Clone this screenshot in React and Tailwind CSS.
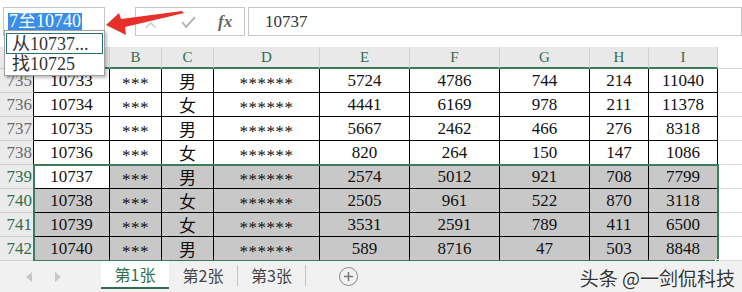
import React from "react";

const cols = [
  { key: "A", w: "w-[76px]" },
  { key: "B", w: "w-[52px]" },
  { key: "C", w: "w-[52px]" },
  { key: "D", w: "w-[106px]" },
  { key: "E", w: "w-[90px]" },
  { key: "F", w: "w-[90px]" },
  { key: "G", w: "w-[90px]" },
  { key: "H", w: "w-[59px]" },
  { key: "I", w: "w-[69px]" },
];

const rows = [
  ["735", "10733", "***", "男", "******", "5724", "4786", "744", "214", "11040"],
  ["736", "10734", "***", "女", "******", "4441", "6169", "978", "211", "11378"],
  ["737", "10735", "***", "男", "******", "5667", "2462", "466", "276", "8318"],
  ["738", "10736", "***", "女", "******", "820", "264", "150", "147", "1086"],
  ["739", "10737", "***", "男", "******", "2574", "5012", "921", "708", "7799"],
  ["740", "10738", "***", "女", "******", "2505", "961", "522", "870", "3118"],
  ["741", "10739", "***", "女", "******", "3531", "2591", "789", "411", "6500"],
  ["742", "10740", "***", "男", "******", "589", "8716", "47", "503", "8848"],
];

const serif = "font-['Liberation_Serif','Noto_Sans_CJK_SC',serif]";
const cjk = "font-['Noto_Sans_CJK_SC',sans-serif]";

function Cell({ text, w, selected, active }) {
  let bg = "bg-white";
  if (selected && !active) bg = "bg-[#c8c8c8]";
  const isStar = text.startsWith("*");
  const isCjk = text === "男" || text === "女";
  return (
    <div
      className={`${w} ${bg} h-full shrink-0 border-r border-b border-black flex items-center justify-center text-[17px] text-[#111] leading-none`}
    >
      {isStar ? (
        <span className={`${serif} translate-y-[3px] tracking-[0.5px]`}>{text}</span>
      ) : isCjk ? (
        <span className={`${cjk} text-[17px]`}>{text}</span>
      ) : (
        <span className={serif}>{text}</span>
      )}
    </div>
  );
}

export default function App() {
  return (
    <div className="w-[742px] h-[292px] overflow-hidden bg-white relative select-none">
      {/* top bar */}
      <div className="h-[47px] flex items-start pt-[7px]">
        <div className="ml-[3px] w-[102px] h-[29px] border border-[#c6c6c6] flex items-center pl-[4px]">
          <span className={`${serif} text-[18px] leading-[17px] bg-[#3a8ee6] text-white px-[1px]`}>
            7至10740
          </span>
        </div>
        <div className="ml-[30px] w-[110px] h-[29px] border border-[#c6c6c6] flex items-center">
          <svg width="110" height="27" viewBox="0 0 110 27">
            <path d="M10 20 L15 15 L20 20" stroke="#cfcfcf" strokeWidth="1.6" fill="none" />
            <path d="M47 14 L51 19 L60 9" stroke="#b4b4b4" strokeWidth="2" fill="none" />
          </svg>
        </div>
        <div className="ml-[3px] flex-1 h-[29px] border border-[#c6c6c6] flex items-center pl-[16px]">
          <span className={`${serif} text-[17px] text-[#333]`}>10737</span>
        </div>
      </div>
      <span className={`absolute left-[218px] top-[9px] ${serif} italic font-bold text-[17px] text-[#666]`}>
        fx
      </span>

      {/* sheet */}
      <div className="relative">
        <div className="flex h-[22px]">
          <div className="w-[34px] shrink-0 bg-[#e9e9e9] border-r border-b border-[#d0d0d0]" />
          {cols.map((c) => (
            <div
              key={c.key}
              className={`${c.w} shrink-0 bg-[#e9e9e9] border-r border-[#d0d0d0] border-b-2 border-b-[#3d7a5b] flex items-center justify-center ${serif} text-[15px] text-[#2f6f4f]`}
            >
              {c.key}
            </div>
          ))}
          <div className="flex-1 border-b border-[#d8d8d8]" />
        </div>
        {rows.map((r, i) => {
          const selected = i >= 4;
          return (
            <div key={r[0]} className="flex h-[24px]">
              <div
                className={`w-[34px] shrink-0 bg-[#ebebeb] border-r border-black border-b border-b-[#d0d0d0] flex items-center justify-end pr-[1px] ${serif} text-[17px] ${
                  selected ? "text-[#2f6f4f]" : "text-[#6b6b6b]"
                }`}
              >
                {r[0]}
              </div>
              {cols.map((c, j) => (
                <Cell
                  key={c.key}
                  text={r[j + 1]}
                  w={c.w}
                  selected={selected}
                  active={i === 4 && j === 0}
                />
              ))}
              <div className="flex-1 border-b border-[#dcdcdc]" />
            </div>
          );
        })}
        {/* selection border */}
        <div className="absolute left-[33px] top-[117px] w-[686px] h-[98px] border-2 border-[#3d7a5b] pointer-events-none" />
        <div className="absolute left-[715px] top-[212px] w-[5px] h-[5px] bg-[#3d7a5b] border border-white" />
      </div>

      {/* tab bar */}
      <div className="h-[31px] bg-[#f1f1f1] flex items-start relative">
        <div className="w-[101px] h-full flex items-center gap-[21px] pl-[26px]">
          <svg width="7" height="10" viewBox="0 0 7 10">
            <path d="M6 0 L0 5 L6 10 Z" fill="#c8c8c8" />
          </svg>
          <svg width="7" height="10" viewBox="0 0 7 10">
            <path d="M1 0 L7 5 L1 10 Z" fill="#c8c8c8" />
          </svg>
        </div>
        <div className={`w-[68px] h-[28px] bg-white border-b-2 border-[#2f6f4f] flex items-center justify-center ${cjk} text-[16px] text-[#2f6f4f]`}>
          第1张
        </div>
        <div className={`w-[68px] h-[28px] flex items-center justify-center ${cjk} text-[16px] text-[#444]`}>
          第2张
        </div>
        <div className="w-px h-[21px] bg-[#c4c4c4] mt-[4px]" />
        <div className={`w-[67px] h-[28px] flex items-center justify-center ${cjk} text-[16px] text-[#444]`}>
          第3张
        </div>
        <div className="w-px h-[21px] bg-[#c4c4c4] mt-[4px]" />
        <div className="ml-[33px] mt-[6px] w-[19px] h-[19px] rounded-full border border-[#8a8a8a] flex items-center justify-center">
          <svg width="11" height="11" viewBox="0 0 11 11">
            <path d="M5.5 1 V10 M1 5.5 H10" stroke="#777" strokeWidth="1.5" />
          </svg>
        </div>
        <div
          className={`ml-auto mr-[7px] mt-[3px] ${cjk} text-[19px] text-[#333] [text-shadow:0_0_2px_#fff,0_0_2px_#fff]`}
        >
          头条 @一剑侃科技
        </div>
      </div>

      {/* name box dropdown */}
      <div className="absolute left-[4px] top-[30px] w-[101px] h-[46px] bg-white border border-[#a0a0a0] shadow-[2px_2px_3px_rgba(0,0,0,0.25)] pt-[2px] px-[1px]">
        <div className={`h-[21px] border border-[#2b6e6e] flex items-center pl-[5px] ${serif} text-[18px] text-[#333] leading-none`}>
          从10737...
        </div>
        <div className={`h-[20px] flex items-center pl-[6px] ${serif} text-[18px] text-[#333] leading-none`}>
          找10725
        </div>
      </div>

      {/* red arrow */}
      <svg className="absolute left-0 top-0 pointer-events-none" width="200" height="45" viewBox="0 0 200 45">
        <polygon
          points="106,25 119,13 121,19 182,11 184,13 125,27 126,35"
          fill="#e8302a"
        />
      </svg>
    </div>
  );
}
